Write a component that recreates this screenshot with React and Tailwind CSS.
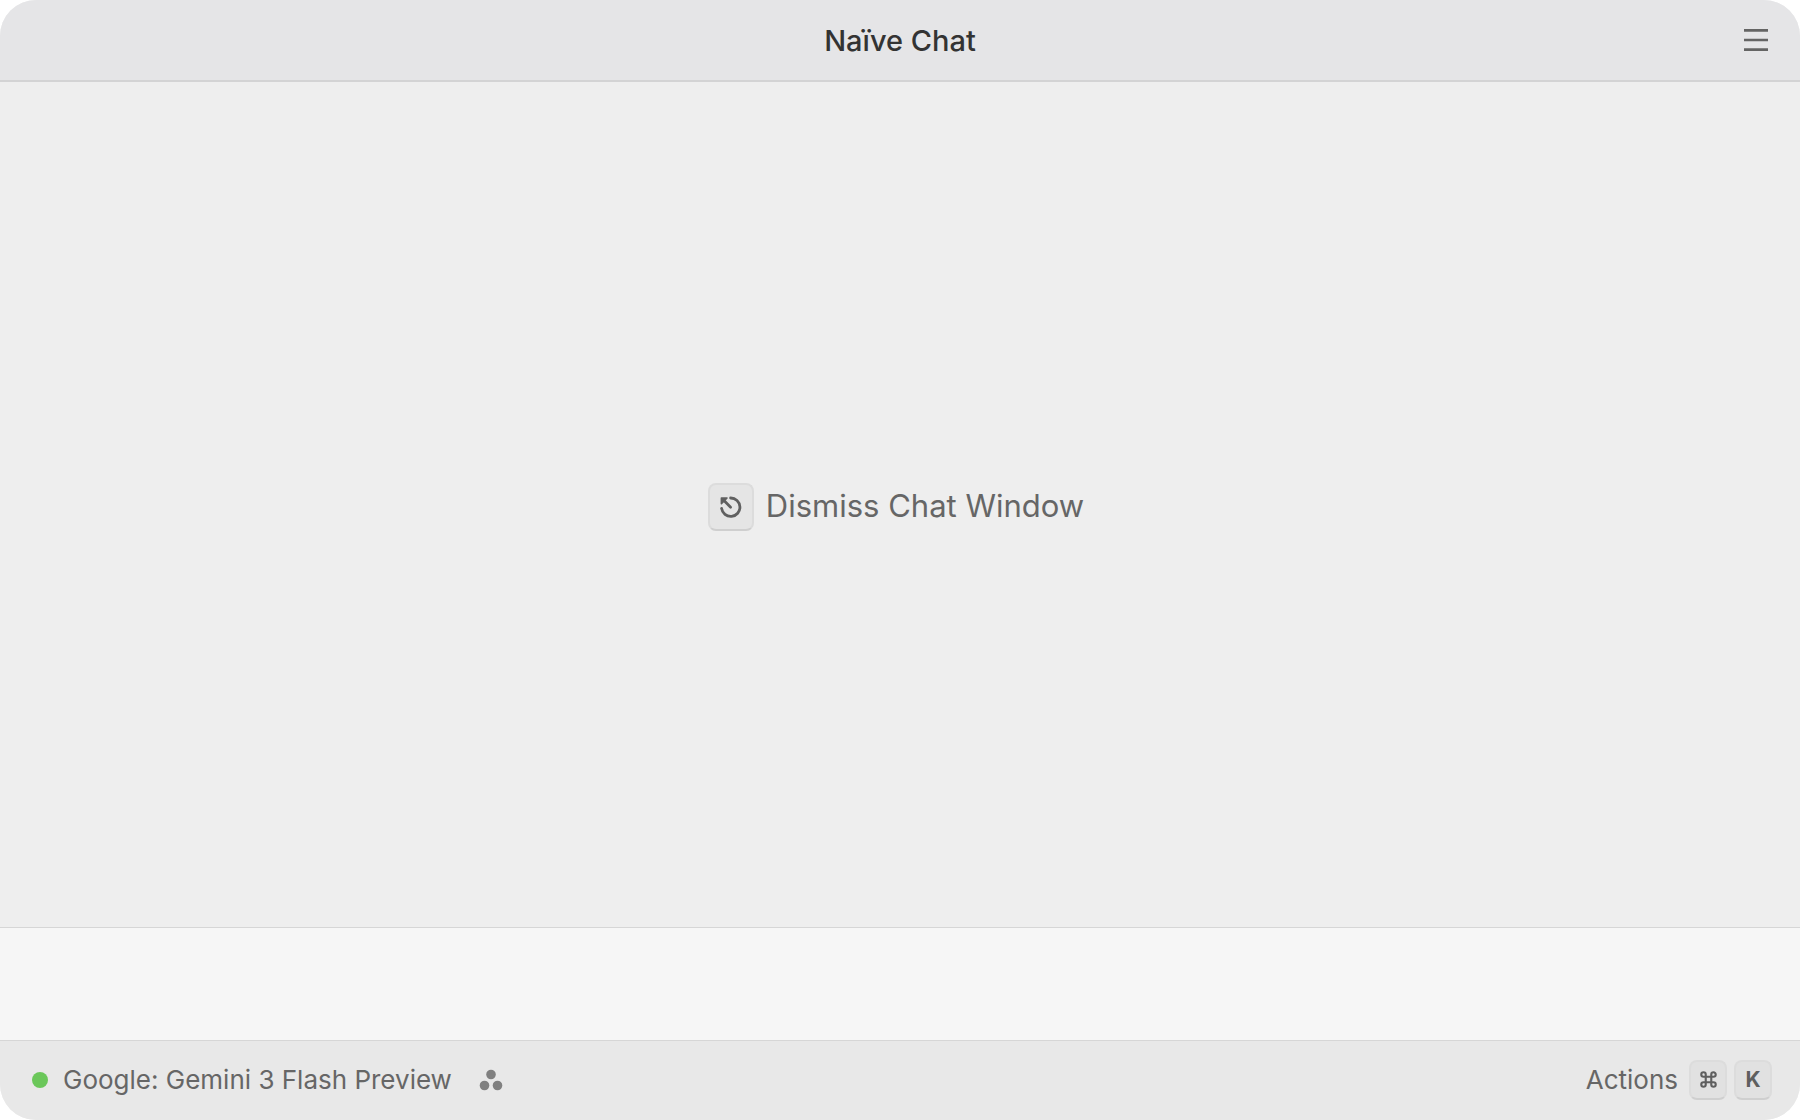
import { useState } from 'react';

const KeyCap = ({ className = '', children }) => (
  <kbd
    className={`flex items-center justify-center border-2 border-[#dcdcdc] border-b-[#cfcfcf] font-[Inter,sans-serif] font-bold text-[#5f5f5f] ${className}`}
  >
    {children}
  </kbd>
);

const MenuIcon = () => (
  <svg className="h-6 w-6" viewBox="0 0 24 24" fill="none" stroke="#646464" strokeWidth="2.6" aria-hidden="true">
    <path d="M0 2.4h24M0 12h24M0 21.6h24" />
  </svg>
);

const EscapeIcon = () => (
  <svg
    className="h-6 w-6"
    viewBox="0 0 24 24"
    fill="none"
    stroke="#606060"
    strokeWidth="2.8"
    strokeLinecap="round"
    strokeLinejoin="round"
    aria-hidden="true"
  >
    <path d="M11.6 3a9.2 9.2 0 1 1-9 10.4" />
    <path d="M11.6 12.2L4 4.6" />
    <path d="M2.4 8.6V3h5.6z" fill="#606060" strokeWidth="1.6" />
  </svg>
);

const CommandIcon = () => (
  <svg className="h-[17px] w-[17px]" viewBox="0 0 16 16" fill="none" stroke="#5f5f5f" strokeWidth="2" aria-hidden="true">
    <path d="M5.4 5.4H3.3A2.1 2.1 0 1 1 5.4 3.3v9.4a2.1 2.1 0 1 1-2.1-2.1h9.4a2.1 2.1 0 1 1-2.1 2.1V3.3a2.1 2.1 0 1 1 2.1 2.1z" />
  </svg>
);

const DotsIcon = () => (
  <svg className="h-6 w-6" viewBox="0 0 24 24" fill="#808080" aria-hidden="true">
    <circle cx="12" cy="6.5" r="4.8" />
    <circle cx="5.5" cy="17.5" r="4.8" />
    <circle cx="18.5" cy="17.5" r="4.8" />
  </svg>
);

export default function App() {
  const [message, setMessage] = useState('');

  return (
    <div className="min-h-screen bg-white">
      <div className="flex min-h-screen flex-col overflow-hidden rounded-[36px] bg-[#eeeeee] font-[Inter,sans-serif] text-[#666666]">
        <header className="grid shrink-0 grid-cols-[1fr_auto_1fr] items-center border-b-2 border-[#d3d3d4] bg-[#e5e5e7] px-8">
          <h1 className="col-start-2 pt-0.5 text-[29px] leading-[78px] font-medium text-[#333333]">Naïve Chat</h1>
          <button type="button" aria-label="Menu" className="justify-self-end">
            <MenuIcon />
          </button>
        </header>

        <main className="flex flex-1 items-center justify-center pt-1 pr-2">
          <button type="button" className="flex items-center gap-3 text-[31px] leading-10">
            <KeyCap className="h-12 w-[46px] rounded-lg bg-[#e5e5e5]">
              <EscapeIcon />
            </KeyCap>
            <span className="pb-0.5">Dismiss Chat Window</span>
          </button>
        </main>

        <textarea
          aria-label="Message"
          value={message}
          onChange={(e) => setMessage(e.target.value)}
          className="h-[114px] shrink-0 resize-none border-y border-[#d6d6d6] bg-[#f6f6f6] px-8 py-8 text-[31px] leading-10 outline-none"
        />

        <footer className="flex h-[79px] shrink-0 items-center justify-between bg-[#e8e8e8] pr-7 pb-0.5 pl-8 text-[26px] leading-10">
          <button type="button" className="flex items-center gap-[15px]">
            <span className="h-4 w-4 rounded-full bg-[#6bc75a]" />
            <span className="mr-3">Google: Gemini 3 Flash Preview</span>
            <DotsIcon />
          </button>
          <button type="button" className="flex items-center gap-[7px]">
            <span className="mr-1">Actions</span>
            <KeyCap className="h-10 w-[38px] rounded-lg bg-[#e1e1e1]">
              <CommandIcon />
            </KeyCap>
            <KeyCap className="h-10 w-[38px] rounded-lg bg-[#e1e1e1] text-[21px]">K</KeyCap>
          </button>
        </footer>
      </div>
    </div>
  );
}
